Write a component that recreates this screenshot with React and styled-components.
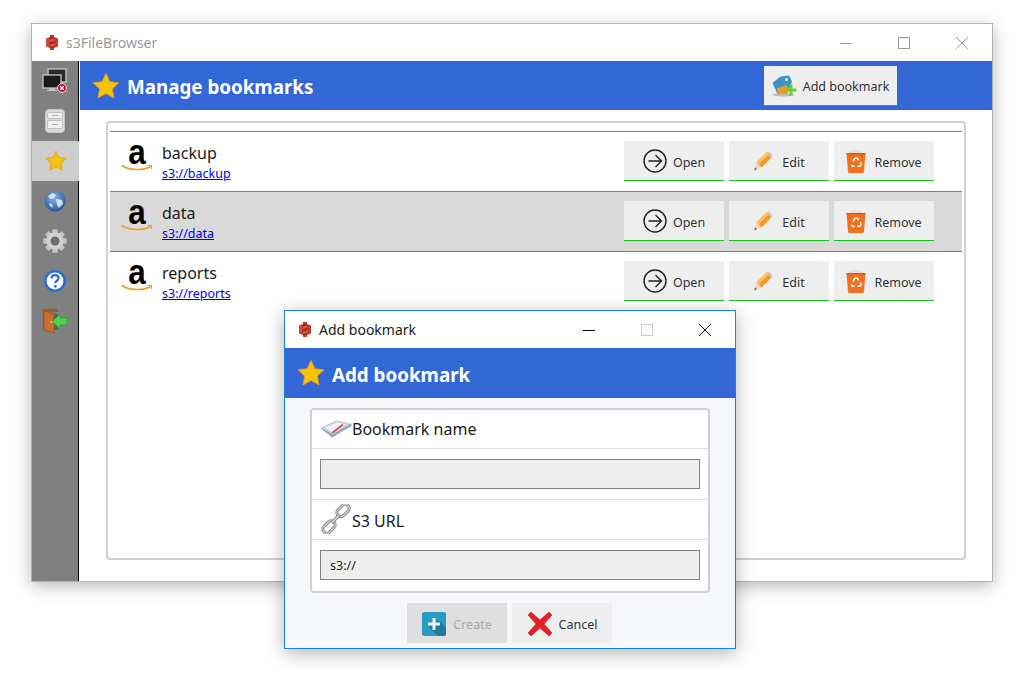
import React from 'react'
import styled, { createGlobalStyle } from 'styled-components'

const Global = createGlobalStyle`
  html, body { margin: 0; padding: 0; background: #fff; }
  body { font-family: "Noto Sans", "Open Sans", sans-serif; color: #222; }
`

const Desktop = styled.div`
  position: relative;
  width: 1030px;
  height: 682px;
  padding: 23px 0 0 31px;
  box-sizing: border-box;
  overflow: hidden;
`

const MainWindow = styled.div`
  width: 962px;
  height: 559px;
  box-sizing: border-box;
  border: 1px solid #b4b4b4;
  background: #fff;
  display: flex;
  flex-direction: column;
  box-shadow: 0 4px 16px rgba(0, 0, 0, 0.28);
`

const TitleBar = styled.div`
  height: 37px;
  flex: none;
  display: flex;
  align-items: center;
  background: #fff;
  padding-left: 13px;
  padding-right: 1px;
  font-size: 14px;
  color: ${p => p.$color};
`

const TitleText = styled.span`
  flex: 1;
  margin-left: 7px;
`

const WinButton = styled.div`
  width: 58px;
  height: 100%;
  display: flex;
  align-items: center;
  justify-content: center;
`

const Body = styled.div`
  flex: 1;
  display: flex;
  min-height: 0;
`

const Sidebar = styled.div`
  width: 46px;
  flex: none;
  background: #808080;
  border-right: 1px solid #000;
  margin-right: 1px;
  display: flex;
  flex-direction: column;
`

const SideItem = styled.div`
  height: 40px;
  margin-right: ${p => (p.$active ? '-1px' : '0')};
  display: flex;
  align-items: center;
  justify-content: center;
  background: ${p => (p.$active ? '#cdcdcd' : 'transparent')};
`

const Content = styled.div`
  flex: 1;
  display: flex;
  flex-direction: column;
  min-width: 0;
`

const Banner = styled.div`
  height: ${p => p.$h}px;
  flex: none;
  background: #3367d6;
  display: flex;
  align-items: center;
  padding-left: 12px;
  color: #fff;
`

const BannerTitle = styled.div`
  font-size: 18.8px;
  font-weight: 700;
  margin: 4px 0 0 7px;
  line-height: 1;
`

const BannerAction = styled.div`
  margin-left: auto;
  margin-right: 95px;
`

const Panel = styled.div`
  margin: 11px 26px 21px 26px;
  flex: 1;
  border: 2px solid #d0d0d0;
  border-radius: 4px;
  padding: 8px 2px 0;
  background: #fff;
`

const Row = styled.div`
  height: 59px;
  border-top: 1px solid #808080;
  background: ${p => (p.$selected ? '#d9d9d9' : '#fff')};
  display: flex;
  align-items: center;
  padding-left: 10px;
`

const LogoSlot = styled.div`
  width: 34px;
  height: 30px;
  flex: none;
  margin-top: -5px;
`

const AmazonSvg = styled.svg`
  display: block;
  margin-top: -14px;
`

const RowInfo = styled.div`
  margin-left: 8px;
  display: flex;
  flex-direction: column;
  flex: 1;
`

const RowName = styled.div`
  font-size: 16px;
  line-height: 22px;
  color: #1a1a1a;
`

const RowLink = styled.a`
  font-size: 12.5px;
  line-height: 17px;
  margin-top: 1px;
  color: #0000ee;
  text-decoration: underline;
`

const RowActions = styled.div`
  display: flex;
  gap: 5px;
  margin: 0 28px 1px 0;
`

const Button = styled.div`
  width: ${p => p.$w || 100}px;
  height: 40px;
  box-sizing: border-box;
  background: ${p => (p.$disabled ? '#dfdfdf' : '#eeeeee')};
  border-bottom: ${p => (p.$plain ? 'none' : `1px solid ${p.$line || '#16c21e'}`)};
  display: flex;
  align-items: center;
  justify-content: center;
  gap: ${p => p.$gap || 6}px;
  padding-top: 1px;
  font-size: 12.5px;
  color: ${p => (p.$disabled ? '#a8a8a8' : '#333')};
`

const ButtonLabel = styled.span`
  margin-top: 2px;
`

const Dialog = styled.div`
  position: absolute;
  left: 284px;
  top: 310px;
  width: 452px;
  height: 339px;
  box-sizing: border-box;
  border: 1px solid #1a84d8;
  background: #f5f7fa;
  display: flex;
  flex-direction: column;
  box-shadow: 0 4px 18px rgba(0, 0, 0, 0.3);
`

const FormBox = styled.div`
  margin: 10px 25px 0;
  height: 185px;
  box-sizing: border-box;
  border: 2px solid #d0d0d0;
  border-radius: 4px;
  background: #fff;
  display: flex;
  flex-direction: column;
`

const FormLabel = styled.div`
  height: ${p => p.$h}px;
  box-sizing: border-box;
  border-bottom: 1px solid #dcdcdc;
  display: flex;
  align-items: center;
  padding-left: 8px;
  font-size: 16px;
  color: #1a1a1a;
`

const LabelText = styled.span`
  margin-top: ${p => p.$shift || 0}px;
`

const FormField = styled.div`
  height: 51px;
  box-sizing: border-box;
  padding: 10px 8px;
  border-bottom: ${p => (p.$last ? 'none' : '1px solid #dcdcdc')};
`

const Input = styled.div`
  height: 30px;
  box-sizing: border-box;
  border: 1px solid #808080;
  background: #eeeeee;
  font-size: 12.5px;
  color: #222;
  display: flex;
  align-items: center;
  padding-left: 9px;
`

const DialogActions = styled.div`
  display: flex;
  justify-content: center;
  gap: 5px;
  margin-top: 10px;
  padding-right: 1px;
`

const Star = ({ size }) => (
  <svg width={size} height={size} viewBox="0 0 28 28">
    <path d="M14 1.500l3.900 8.200 9 1.100-6.600 6.200 1.700 8.900L14 21.500l-8 4.400 1.700-8.900L1.100 10.800l9-1.100z" fill="#f5c40f" stroke="#e79a1c" strokeWidth="1" strokeLinejoin="round" />
  </svg>
)

const AppLogo = () => (
  <svg width="14" height="15" viewBox="0 0 14 15">
    <path d="M5 0h4v2l4 1.500v8L9 13v2H5v-2l-4-1.500v-8L5 2z" fill="#c0392b" />
    <path d="M5 2h4v11H5z" fill="#8e2a1f" />
    <path d="M5 4.500l4-1v2.500L5 7zM5 9.500l4-1V11l-4 1z" fill="#d9584a" />
    <path d="M1 3.500l3 .6v7.500l-3-.6z" fill="#d9584a" opacity="0.600" />
  </svg>
)

const MonitorsIcon = () => (
  <svg width="26" height="26" viewBox="0 0 26 26">
    <rect x="6" y="1" width="18" height="13" fill="#2a2a2a" stroke="#c8c8c8" strokeWidth="1.300" />
    <rect x="1" y="7" width="18" height="13" fill="#1a1a1a" stroke="#c8c8c8" strokeWidth="1.300" />
    <path d="M7 20h6v2h2v1H5v-1h2z" fill="#c4c4c4" />
    <circle cx="20" cy="20" r="4.500" fill="#c8102e" stroke="#e4e4e4" />
    <path d="M18.300 18.300l3.400 3.400M21.700 18.300l-3.400 3.400" stroke="#fff" strokeWidth="1.300" />
  </svg>
)

const DriveIcon = () => (
  <svg width="20" height="24" viewBox="0 0 20 24">
    <rect x="0.500" y="0.500" width="19" height="23" rx="3.500" fill="#dcdcdc" stroke="#c4c4c4" />
    <rect x="2.500" y="3.500" width="15" height="6" rx="1" fill="#efefef" stroke="#c0c0c0" />
    <rect x="2.500" y="11.500" width="15" height="8" rx="1" fill="#efefef" stroke="#c0c0c0" />
    <path d="M7 6.500h6M7 15.500h6" stroke="#b0b0b0" strokeWidth="1.200" />
  </svg>
)

const GlobeIcon = () => (
  <svg width="22" height="22" viewBox="0 0 22 22">
    <defs>
      <radialGradient id="glb" cx="0.450" cy="0.350" r="0.700">
        <stop offset="0" stopColor="#8db4e6" />
        <stop offset="1" stopColor="#1f4f96" />
      </radialGradient>
    </defs>
    <circle cx="11" cy="11" r="10.500" fill="url(#glb)" />
    <path d="M4 6l5-3 3 2-2 3-4 1zM12 9l6 1 1 4-4 4-2-3zM5 13l3 1 1 4-3-2z" fill="#e8f0fa" opacity="0.850" />
  </svg>
)

const GearIcon = () => {
  const teeth = [0, 45, 90, 135, 180, 225, 270, 315]
  return (
    <svg width="24" height="24" viewBox="0 0 24 24">
      {teeth.map(a => (
        <rect key={a} x="9.500" y="0.500" width="5" height="23" rx="1" fill="#c4c4c4" transform={`rotate(${a} 12 12)`} />
      ))}
      <circle cx="12" cy="12" r="8.500" fill="#d2d2d2" />
      <circle cx="12" cy="12" r="4.500" fill="#6e6e6e" />
    </svg>
  )
}

const HelpIcon = () => (
  <svg width="22" height="22" viewBox="0 0 22 22">
    <circle cx="11" cy="11" r="9.700" fill="#fff" stroke="#2a6fd0" strokeWidth="2.600" />
    <path d="M7.500 8.500c0-2 1.600-3.300 3.600-3.300s3.500 1.200 3.500 3c0 2.600-3.300 2.500-3.300 5" fill="none" stroke="#2a6fd0" strokeWidth="2.200" />
    <circle cx="11.300" cy="16.300" r="1.400" fill="#2a6fd0" />
  </svg>
)

const DoorIcon = () => (
  <svg width="26" height="26" viewBox="0 0 26 26">
    <path d="M1 1h15v3H4v17H1z" fill="#a45a22" />
    <path d="M2 3l10 3v19l-10-3z" fill="#c96f2b" stroke="#8a4a1a" strokeWidth="0.600" />
    <path d="M12 6h4v16h-4z" fill="#606060" />
    <circle cx="9.500" cy="14" r="0.900" fill="#f3d27a" />
    <path d="M25 10v7h-7v4l-8-7.500 8-7.500v4z" fill="#4fd04a" stroke="#1f8f2f" strokeWidth="0.600" />
  </svg>
)

const AmazonIcon = () => (
  <AmazonSvg width="34" height="44" viewBox="0 -14 34 44">
    <text x="0" y="20" transform="translate(17 0) scale(0.9 1)" textAnchor="middle" fontFamily="'Liberation Sans', sans-serif" fontWeight="700" fontSize="35" fill="#000">a</text>
    <path d="M1.500 21.500c8 5 21 5.500 29 1" fill="none" stroke="#f29a1f" strokeWidth="1.500" />
    <path d="M27.500 21.500h4v3.500" fill="none" stroke="#f29a1f" strokeWidth="1.200" />
  </AmazonSvg>
)

const OpenIcon = () => (
  <svg width="24" height="24" viewBox="0 0 24 24">
    <circle cx="12" cy="12" r="11" fill="none" stroke="#222" strokeWidth="1.400" />
    <path d="M5.500 12h13M12.500 6l6 6-6 6" fill="none" stroke="#222" strokeWidth="1.400" />
  </svg>
)

const PencilIcon = () => (
  <svg width="20" height="20" viewBox="0 0 20 20">
    <path d="M3.500 11.500L13.500 1.500l5 5-10 10z" fill="#f59a23" />
    <path d="M3.500 11.500L13.500 1.500l2 2-10 10z" fill="#fbc25a" />
    <path d="M13.500 1.500l1.500-1c1.500 0 4.500 3 4.500 4.500l-1 1.500z" fill="#d8c6b4" />
    <path d="M3.500 11.500l5 5L1 19.500z" fill="#f3d6ad" />
    <path d="M1 19.500l1.200-3.300 2 2z" fill="#777" />
  </svg>
)

const TrashIcon = () => (
  <svg width="20" height="24" viewBox="0 0 20 24">
    <path d="M3 3l2-2 2 1 2-2 3 2 2-1 3 3v2H3z" fill="#e9dfda" />
    <path d="M0.500 4h19L18 22.500c0 .8-.7 1.500-1.500 1.500h-13c-.8 0-1.500-.7-1.500-1.500z" fill="#f2711c" />
    <path d="M0.500 4h19v1.300H0.500z" fill="#d9531e" />
    <path d="M7 12.500l2-3.300h2.300l1.300 2.100M14.300 13.300l.9 2.300-1.300 1.600h-2.300M8.700 17.200H6.300l-.7-1.700" fill="none" stroke="#fff" strokeWidth="1.500" />
  </svg>
)

const TagPlusIcon = () => (
  <svg width="25" height="22" viewBox="0 0 25 22">
    <ellipse cx="11.500" cy="19.800" rx="11" ry="1.600" fill="#b8b8b8" />
    <path d="M0.500 8l8-6.500 8.500-1 3 6-5 12.500H5.500z" fill="#3d93c4" />
    <path d="M5 13.500l9-3.500 3 3.500-2.500 5.500H5.500z" fill="#f29a1f" />
    <circle cx="14.500" cy="4.500" r="1.500" fill="#e8f4fa" />
    <path d="M17.500 9.500h3v4h4v3h-4v4h-3v-4h-4v-3h4z" fill="#66cf34" />
  </svg>
)

const BookIcon = () => (
  <svg width="32" height="18" viewBox="0 0 32 18">
    <path d="M0.500 8l16-7.500L31.500 4v2L12 17.500z" fill="#8ea6c0" />
    <path d="M1 7.500L16.500 0.500 31 3.500 12.500 14.500z" fill="#c9d4e0" />
    <path d="M5 7.500L16.500 2.500l10 2-14 8z" fill="#eef1f5" />
    <path d="M12 13l11-8.500" stroke="#e0474c" strokeWidth="1.600" />
  </svg>
)

const ChainIcon = () => (
  <svg width="32" height="30" viewBox="0 0 32 30">
    <g fill="none" stroke="#8f8f8f" strokeWidth="3.200">
      <rect x="16" y="2.500" width="14" height="8" rx="4" transform="rotate(-45 23 6.500)" />
      <rect x="2" y="19" width="14" height="8" rx="4" transform="rotate(-45 9 23)" />
    </g>
    <g fill="none" stroke="#dadada" strokeWidth="1.100">
      <rect x="16" y="2.500" width="14" height="8" rx="4" transform="rotate(-45 23 6.500)" />
      <rect x="2" y="19" width="14" height="8" rx="4" transform="rotate(-45 9 23)" />
    </g>
    <path d="M11.500 19l8-8" stroke="#8f8f8f" strokeWidth="3.200" />
    <path d="M11.500 19l8-8" stroke="#e2e2e2" strokeWidth="1.100" />
  </svg>
)

const PlusIcon = () => (
  <svg width="24" height="24" viewBox="0 0 24 24">
    <rect width="24" height="24" rx="2" fill="#2a9cc4" />
    <path d="M7 15l9 9h6c1 0 2-1 2-2v-6l-8-8z" fill="#1f7a9c" />
    <path d="M10.500 6h3v4.500H18v3h-4.500V18h-3v-4.500H6v-3h4.500z" fill="#e8f5fa" />
  </svg>
)

const CancelIcon = () => (
  <svg width="26" height="26" viewBox="0 0 26 26">
    <path d="M4 1l9 8 9-8 3 3-8 9 8 9-3 3-9-8-9 8-3-3 8-9-8-9z" fill="#e3202a" stroke="#b81820" strokeWidth="0.600" strokeLinejoin="round" />
  </svg>
)

const MinGlyph = ({ color }) => (
  <svg width="12" height="12" viewBox="0 0 12 12">
    <path d="M0 6.500h12" stroke={color} strokeWidth="1" />
  </svg>
)

const MaxGlyph = ({ color }) => (
  <svg width="12" height="12" viewBox="0 0 12 12">
    <rect x="0.500" y="0.500" width="11" height="11" fill="none" stroke={color} />
  </svg>
)

const CloseGlyph = ({ color }) => (
  <svg width="12" height="12" viewBox="0 0 12 12">
    <path d="M0 0l12 12M12 0L0 12" stroke={color} strokeWidth="1" />
  </svg>
)

const sideItems = [
  { id: 'conn', icon: <MonitorsIcon /> },
  { id: 'drive', icon: <DriveIcon /> },
  { id: 'star', icon: <Star size={22} />, active: true },
  { id: 'globe', icon: <GlobeIcon /> },
  { id: 'gear', icon: <GearIcon /> },
  { id: 'help', icon: <HelpIcon /> },
  { id: 'exit', icon: <DoorIcon /> },
]

const bookmarks = [
  { name: 'backup', url: 's3://backup' },
  { name: 'data', url: 's3://data', selected: true },
  { name: 'reports', url: 's3://reports' },
]

export default function App() {
  return (
    <Desktop>
      <Global />
      <MainWindow>
        <TitleBar $color="#999">
          <AppLogo />
          <TitleText>s3FileBrowser</TitleText>
          <WinButton><MinGlyph color="#999" /></WinButton>
          <WinButton><MaxGlyph color="#999" /></WinButton>
          <WinButton><CloseGlyph color="#999" /></WinButton>
        </TitleBar>
        <Body>
          <Sidebar>
            {sideItems.map(item => (
              <SideItem key={item.id} $active={item.active}>{item.icon}</SideItem>
            ))}
          </Sidebar>
          <Content>
            <Banner $h={49}>
              <Star size={28} />
              <BannerTitle>Manage bookmarks</BannerTitle>
              <BannerAction>
                <Button $w={133} $line="#2aa63a">
                  <TagPlusIcon />
                  <ButtonLabel>Add bookmark</ButtonLabel>
                </Button>
              </BannerAction>
            </Banner>
            <Panel>
              {bookmarks.map(b => (
                <Row key={b.name} $selected={b.selected}>
                  <LogoSlot><AmazonIcon /></LogoSlot>
                  <RowInfo>
                    <RowName>{b.name}</RowName>
                    <RowLink href="#">{b.url}</RowLink>
                  </RowInfo>
                  <RowActions>
                    <Button><OpenIcon /><ButtonLabel>Open</ButtonLabel></Button>
                    <Button $gap={9}><PencilIcon /><ButtonLabel>Edit</ButtonLabel></Button>
                    <Button $gap={8}><TrashIcon /><ButtonLabel>Remove</ButtonLabel></Button>
                  </RowActions>
                </Row>
              ))}
            </Panel>
          </Content>
        </Body>
      </MainWindow>
      <Dialog>
        <TitleBar $color="#1a1a1a">
          <AppLogo />
          <TitleText>Add bookmark</TitleText>
          <WinButton><MinGlyph color="#000" /></WinButton>
          <WinButton><MaxGlyph color="#ccc" /></WinButton>
          <WinButton><CloseGlyph color="#000" /></WinButton>
        </TitleBar>
        <Banner $h={50}>
          <Star size={28} />
          <BannerTitle>Add bookmark</BannerTitle>
        </Banner>
        <FormBox>
          <FormLabel $h={39}><BookIcon /><LabelText>Bookmark name</LabelText></FormLabel>
          <FormField><Input /></FormField>
          <FormLabel $h={41}><ChainIcon /><LabelText $shift={3}>S3 URL</LabelText></FormLabel>
          <FormField $last><Input>s3://</Input></FormField>
        </FormBox>
        <DialogActions>
          <Button $plain $disabled $gap={7}><PlusIcon /><ButtonLabel>Create</ButtonLabel></Button>
          <Button $plain $gap={6}><CancelIcon /><ButtonLabel>Cancel</ButtonLabel></Button>
        </DialogActions>
      </Dialog>
    </Desktop>
  )
}
